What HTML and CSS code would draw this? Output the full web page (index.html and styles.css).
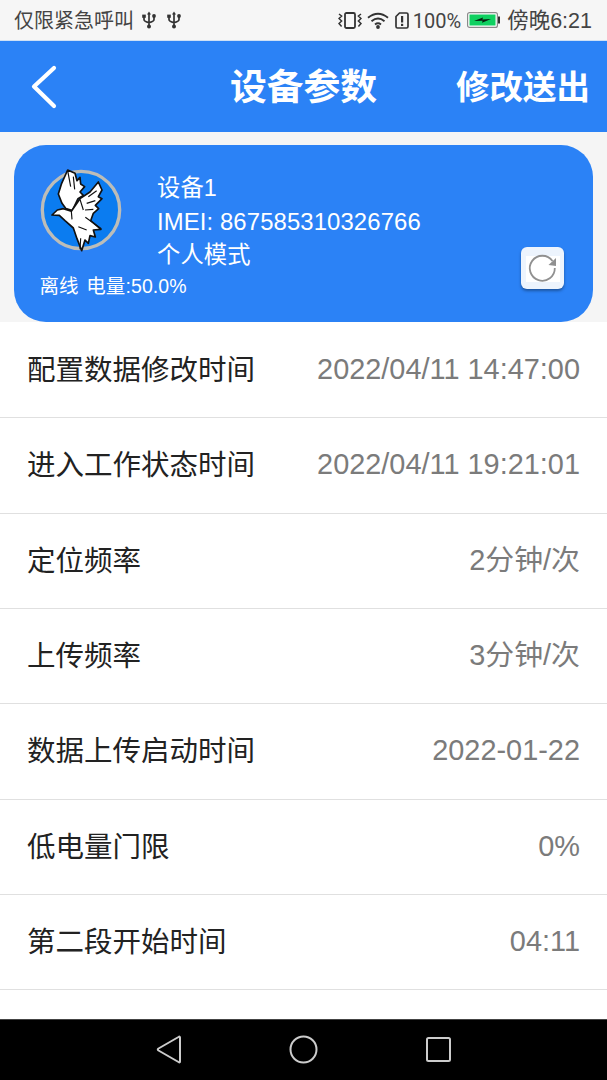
FILE: index.html
```html
<!DOCTYPE html>
<html lang="zh-CN">
<head>
<meta charset="utf-8">
<title>设备参数</title>
<link rel="stylesheet" href="styles.css">
</head>
<body>
<div class="screen">
  <div class="status">
    <div class="status-left">
      <span>仅限紧急呼叫</span>
      <svg class="usb" viewBox="0 0 14 18"><path d="M7 2V16M2 6V8.5Q2 10.5 7 11.7Q12 10.5 12 8.5V6" fill="none" stroke="#333" stroke-width="1.7"/><path d="M5 3.4L7 0.4L9 3.4Z" fill="#333"/><circle cx="7" cy="15.6" r="2" fill="#333"/><rect x="0.2" y="3.6" width="3.6" height="3.2" fill="#333"/><circle cx="12" cy="5" r="1.9" fill="#333"/></svg>
      <svg class="usb second" viewBox="0 0 14 18"><path d="M7 2V16M2 6V8.5Q2 10.5 7 11.7Q12 10.5 12 8.5V6" fill="none" stroke="#333" stroke-width="1.7"/><path d="M5 3.4L7 0.4L9 3.4Z" fill="#333"/><circle cx="7" cy="15.6" r="2" fill="#333"/><rect x="0.2" y="3.6" width="3.6" height="3.2" fill="#333"/><circle cx="12" cy="5" r="1.9" fill="#333"/></svg>
    </div>
    <div class="status-right">
      <svg class="vib" viewBox="0 0 24 17"><rect x="7" y="1" width="10" height="15" rx="1.5" fill="none" stroke="#333" stroke-width="1.8"/><path d="M1 2L3.6 4L1 6.5L3.6 9L1 11.5L3.6 14.5M23 2L20.4 4L23 6.5L20.4 9L23 11.5L20.4 14.5" fill="none" stroke="#333" stroke-width="1.5"/></svg>
      <svg class="wifi" viewBox="0 0 22 17"><path d="M1 5.8Q11 -2.2 21 5.8M4.5 9.2Q11 3.8 17.5 9.2M8 12.4Q11 10 14 12.4" fill="none" stroke="#333" stroke-width="1.9"/><circle cx="11" cy="15" r="1.9" fill="#333"/></svg>
      <svg class="sim" viewBox="0 0 14 17"><path d="M4.5 1H11.5Q13 1 13 2.5V14.5Q13 16 11.5 16H2.5Q1 16 1 14.5V4.5Z" fill="none" stroke="#333" stroke-width="1.7"/><rect x="6" y="4" width="2.2" height="6.5" fill="#333"/><rect x="6" y="11.8" width="2.2" height="2.2" fill="#333"/></svg>
      <span class="pct">100%</span>
      <svg class="batt" viewBox="0 0 33 16"><rect x="0.6" y="0.6" width="29.8" height="14.8" rx="2" fill="#fff" stroke="#8a8a8a" stroke-width="1.2"/><rect x="2.5" y="2.5" width="26" height="11" fill="#0fd060"/><rect x="31" y="4.5" width="2" height="7" fill="#333"/><path d="M7 9L16 5.4L15.4 7.4L24 7L15 10.8L15.6 8.8Z" fill="#06200f"/></svg>
      <span class="clock">傍晚6:21</span>
    </div>
  </div>

  <header class="topbar">
    <svg class="back" viewBox="0 0 28 44"><path d="M24 3L4 21.5L24 41" fill="none" stroke="#fff" stroke-width="4.2" stroke-linecap="round" stroke-linejoin="round"/></svg>
    <h1 class="title">设备参数</h1>
    <span class="action">修改送出</span>
  </header>

  <section class="card-wrap">
    <div class="card">
      <div class="card-top">
        <svg class="avatar" viewBox="0 0 300 300">
          <circle cx="153" cy="150" r="116" fill="#0b7cf0" stroke="#bdbdb8" stroke-width="10"/>
          <path d="M113 30L135 40L141 62L150 52L152 72L164 80L150 96L160 106L144 116L127 152L108 146L96 130L85 102L95 70Z" fill="#fff" stroke="#111" stroke-width="5" stroke-linejoin="round"/>
          <path d="M66 165L82 150L100 146L124 154L150 116L180 96L205 66L216 90L205 110L216 116L196 136L206 146L190 160L182 182L213 208L190 210L196 231L180 227L175 250L165 240L155 272L141 236L130 204L105 182L88 166Z" fill="#fff" stroke="#111" stroke-width="5" stroke-linejoin="round"/>
          <path d="M124 154L126 178M150 118L160 150M175 110L200 92M170 130L196 122M165 150L190 148M166 172L214 206M113 32L122 80M130 50L134 88M145 200L170 210M150 268L152 235" fill="none" stroke="#111" stroke-width="3.5"/>
        </svg>
        <div class="info">
          <div>设备1</div>
          <div class="imei">IMEI: 867585310326766</div>
          <div>个人模式</div>
        </div>
      </div>
      <div class="battery-line">离线 电量:50.0%</div>
      <button class="refresh" type="button" aria-label="刷新">
        <svg viewBox="0 0 43 42"><rect x="5" y="9" width="34" height="26" fill="#fff"/><path d="M31.5 14A12.5 12.5 0 1 0 33.8 21" fill="none" stroke="#909090" stroke-width="1.8"/><path d="M35 11V19L27.5 18Z" fill="#909090"/></svg>
      </button>
    </div>
  </section>

  <main class="list">
    <div class="row"><span>配置数据修改时间</span><span class="val">2022/04/11 14:47:00</span></div>
    <div class="row"><span>进入工作状态时间</span><span class="val">2022/04/11 19:21:01</span></div>
    <div class="row"><span>定位频率</span><span class="val">2分钟/次</span></div>
    <div class="row"><span>上传频率</span><span class="val">3分钟/次</span></div>
    <div class="row"><span>数据上传启动时间</span><span class="val">2022-01-22</span></div>
    <div class="row"><span>低电量门限</span><span class="val">0%</span></div>
    <div class="row"><span>第二段开始时间</span><span class="val">04:11</span></div>
  </main>

  <nav class="navbar">
    <svg class="nav-back" viewBox="0 0 26 29"><path d="M24 2.5V26.5Q24 28 22.5 27L2.5 15.5Q1 14.5 2.5 13.5L22.5 2Q24 1 24 2.5Z" fill="none" stroke="#ccc" stroke-width="2" stroke-linejoin="round"/></svg>
    <svg class="nav-home" viewBox="0 0 29 29"><circle cx="14.5" cy="14.5" r="13" fill="none" stroke="#ccc" stroke-width="2"/></svg>
    <svg class="nav-recent" viewBox="0 0 27 27"><rect x="2" y="2" width="23" height="23" rx="1.5" fill="none" stroke="#ccc" stroke-width="2"/></svg>
  </nav>
</div>
</body>
</html>
```
FILE: styles.css
```css
* { box-sizing: border-box; margin: 0; padding: 0; }
html, body { width: 607px; height: 1080px; overflow: hidden; background: #fff; }
body { font-family: "Liberation Sans", "Noto Sans CJK SC", sans-serif; }
.screen { width: 607px; height: 1080px; display: flex; flex-direction: column; }

.status { height: 41px; flex: none; background: #f6f6f6; border-bottom: 1px solid #cfe0f5; display: flex; justify-content: space-between; align-items: center; padding: 0 15px 0 14px; color: #444; font-size: 20px; line-height: 28px; }
.status span { padding-top: 2px; }
.status-left, .status-right { display: flex; align-items: center; }
.usb { width: 14px; height: 18px; margin-left: 8px; }
.usb.second { margin-left: 11px; }
.vib { width: 24px; height: 17px; }
.wifi { width: 22px; height: 17px; margin-left: 5px; }
.sim { width: 14px; height: 17px; margin-left: 6px; }
.pct { margin-left: 4px; font-family: Roboto, sans-serif; }
.batt { width: 33px; height: 16px; margin-left: 6px; }
.clock { margin-left: 7px; font-size: 21.5px; }

.topbar { height: 91px; flex: none; background: #2b82f6; display: grid; grid-template-columns: 1fr auto 1fr; align-items: center; padding: 0 17px 5px; color: #fff; }
.back { width: 28px; height: 44px; margin: 5px 0 0 13px; }
.title { font-size: 36.8px; font-weight: 700; }
.action { justify-self: end; font-size: 33.5px; font-weight: 700; }

.card-wrap { height: 190px; flex: none; background: #f5f5f5; padding: 13px 14px 0; }
.card { height: 177px; background: #2b82f6; border-radius: 32px; color: #fff; position: relative; padding: 15px 0 0 16px; }
.card-top { display: flex; align-items: flex-start; }
.avatar { display: block; width: 100px; height: 100px; flex: none; }
.info { margin: 12px 0 0 27px; font-size: 23.3px; line-height: 33.5px; letter-spacing: 0.1px; }
.imei { height: 33.5px; font-size: 23.9px; line-height: 31px; }
.battery-line { margin: 1px 0 0 9.5px; font-size: 19.5px; line-height: 24px; word-spacing: 2px; letter-spacing: 0.1px; }
.refresh { position: absolute; right: 29px; top: 102px; width: 43px; height: 42px; border: none; border-radius: 6px; background: #edf4fd; box-shadow: 0 2px 3px rgba(0,0,0,.35); }
.refresh svg { display: block; width: 43px; height: 42px; }

.list { flex: 1; min-height: 0; padding-top: 1px; background: #fff; overflow: hidden; }
.row { height: 95.33px; border-bottom: 1px solid #e0e0e0; display: flex; justify-content: space-between; align-items: center; padding: 0 27px; font-size: 28.5px; line-height: 40px; color: #222; }
.val { color: #7b7b7b; font-size: 28.9px; margin-bottom: 2px; }

.navbar { height: 61px; flex: none; background: #000; border-top: 1px solid #444; display: flex; align-items: center; gap: 107px; padding: 0 0 2px 156px; }
.nav-back { width: 26px; height: 29px; }
.nav-home { width: 29px; height: 29px; }
.nav-recent { width: 27px; height: 27px; }
```
